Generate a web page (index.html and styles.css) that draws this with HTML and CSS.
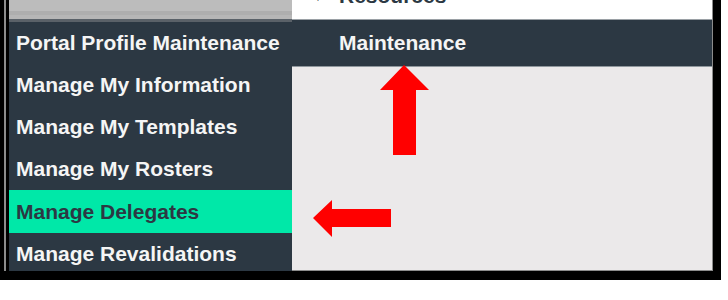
FILE: index.html
```html
<!DOCTYPE html>
<html lang="en">
<head>
    <meta charset="UTF-8">
    <title>Portal Profile Maintenance</title>
    <link rel="stylesheet" href="styles.css">
</head>
<body>
<div class="frame">
    <div class="screen">
        <div class="app">
            <!-- Left menu -->
            <div class="sidebar">
                <div class="sidebar-top"></div>
                <div class="menu">
                    <div class="menu-item">Portal Profile Maintenance</div>
                    <div class="menu-item">Manage My Information</div>
                    <div class="menu-item">Manage My Templates</div>
                    <div class="menu-item">Manage My Rosters</div>
                    <div class="menu-item active">Manage Delegates</div>
                    <div class="menu-item">Manage Revalidations</div>
                </div>
            </div>

            <!-- Right panel -->
            <div class="panel">
                <div class="panel-head">
                    <div class="crumb"><span class="caret">&#9660;</span>Resources</div>
                </div>
                <div class="panel-bar">Maintenance</div>
                <div class="panel-body"></div>
            </div>

            <!-- annotation arrows -->
            <svg class="arrow arrow-up" width="50" height="92" viewBox="0 0 50 92">
                <polygon points="24,0 49,25 36,25 36,90 13,90 13,25 0,25" fill="#ff0000"/>
            </svg>
            <svg class="arrow arrow-left" width="80" height="38" viewBox="0 0 80 38">
                <polygon points="0,18 19,0 19,9 78,9 78,27 19,27 19,37" fill="#ff0000"/>
            </svg>
        </div>
    </div>
</div>
</body>
</html>
```

FILE: styles.css
```css
* {
    box-sizing: border-box;
    margin: 0;
    padding: 0;
}
body {
    background-color: #ffffff;
    font-family: 'Liberation Sans', Arial, sans-serif;
}

/* black screenshot frame */
.frame {
    width: 721px;
    height: 280px;
    background-color: #000000;
    padding-left: 4px;
    padding-right: 8px;
    padding-bottom: 9px;
}
.screen {
    height: 100%;
    border-left: 2px solid #8c8c8c;
    padding-left: 3px;
    background-color: #000000;
}
.app {
    position: relative;
    display: flex;
    height: 100%;
}

/* Sidebar */
.sidebar {
    width: 283px;
    background-color: #2c3843;
    overflow: hidden;
}
.sidebar-top {
    height: 22px;
    background: linear-gradient(#bcbcbc 0, #bcbcbc 11px, #aeaeae 11px, #aeaeae 15px, #b6b6b6 15px, #b6b6b6 19px);
    border-bottom: 3px solid #5a6168;
}
.menu-item {
    height: 42px;
    line-height: 42px;
    padding-left: 7px;
    font-size: 21px;
    font-weight: bold;
    color: #f5f5f5;
    white-space: nowrap;
}
.menu-item.active {
    background-color: #00e8a8;
    color: #2c3843;
    height: 43px;
    line-height: 43px;
}

/* Right panel */
.panel {
    flex: 1;
    display: flex;
    flex-direction: column;
    border-right: 1px solid #8c8c8c;
    border-bottom: 1px solid #8c8c8c;
}
.panel-head {
    height: 20px;
    background-color: #ffffff;
    border-bottom: 1px solid #9aa0a5;
    overflow: hidden;
    padding-left: 21px;
}
.crumb {
    margin-top: -15px;
    line-height: 21px;
    font-size: 21px;
    font-weight: bold;
    color: #2c3843;
    white-space: nowrap;
}
.caret {
    display: inline-block;
    width: 26px;
    font-size: 10px;
    vertical-align: 2px;
}
.panel-bar {
    height: 47px;
    line-height: 46px;
    background-color: #2c3843;
    border-bottom: 1px solid #8f979d;
    padding-left: 47px;
    font-size: 21px;
    font-weight: bold;
    color: #f5f5f5;
}
.panel-body {
    flex: 1;
    background-color: #ebe9ea;
}

/* Arrows */
.arrow {
    position: absolute;
}
.arrow-up {
    left: 371px;
    top: 65px;
}
.arrow-left {
    left: 304px;
    top: 200px;
}
```
